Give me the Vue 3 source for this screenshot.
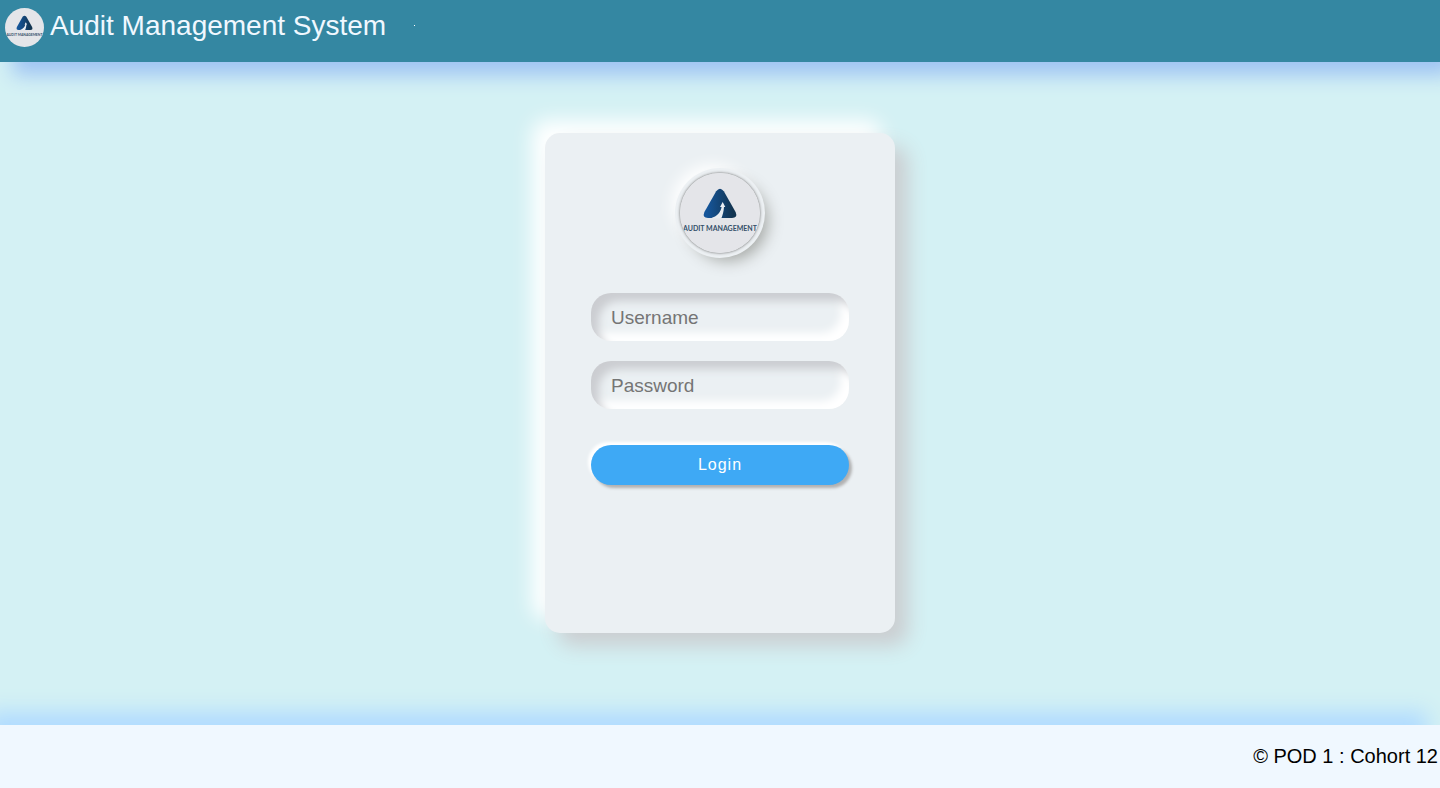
<script setup>
import { ref } from 'vue'

const username = ref('')
const password = ref('')
</script>

<template>
  <div class="page">
    <svg class="defs" width="0" height="0" aria-hidden="true">
      <defs>
        <linearGradient id="peak" x1="0" y1="0" x2="1" y2="0">
          <stop offset="0.1" stop-color="#15559a" />
          <stop offset="0.9" stop-color="#123450" />
        </linearGradient>
        <symbol id="audit-logo" viewBox="0 0 80 80">
          <rect width="80" height="80" fill="#e4e5e9" />
          <path
            d="M36.200 18.200Q40 13.200 43.800 18.200L55.600 39Q58 44.900 52 45H28Q22 44.900 24.400 39Z"
            fill="url(#peak)"
          />
          <path
            d="M31 45.200C37 43.200 40.600 39.500 41.600 34H40L42.700 29L45.300 34H44C43.700 38.500 42.700 42 41.400 45.200Z"
            fill="#e9edf2"
          />
          <text x="40" y="57.500" text-anchor="middle" class="logo-text">AUDIT MANAGEMENT</text>
        </symbol>
      </defs>
    </svg>

    <header class="topbar">
      <svg class="brand-logo" role="img" aria-label="Audit Management"><use href="#audit-logo" /></svg>
      <h1 class="brand">Audit Management System</h1>
      <span class="dot"></span>
    </header>

    <main class="content">
      <form class="card" @submit.prevent>
        <div class="badge">
          <svg class="badge-logo" role="img" aria-label="Audit Management"><use href="#audit-logo" /></svg>
        </div>
        <input v-model="username" class="field" type="text" placeholder="Username" aria-label="Username" />
        <input v-model="password" class="field" type="password" placeholder="Password" aria-label="Password" />
        <button class="login" type="submit">Login</button>
      </form>
    </main>

    <footer class="footer">© POD 1 : Cohort 12</footer>
  </div>
</template>

<style>
body {
  margin: 0;
}
</style>

<style scoped>
.page {
  display: flex;
  flex-direction: column;
  min-height: 100vh;
  overflow: hidden;
  background: #d4f1f4;
  font-family: "Liberation Sans", Arial, sans-serif;
}

.defs {
  position: absolute;
}

.logo-text {
  font-family: Lato, sans-serif;
  font-size: 7px;
  font-weight: 700;
  fill: #34506a;
}

.topbar {
  display: flex;
  align-items: flex-start;
  box-sizing: border-box;
  min-height: 62px;
  padding: 8px 5px;
  background: #3487a2;
  box-shadow: 13px 13px 20px #9ec3f3;
}

.brand-logo {
  width: 39px;
  height: 39px;
  border-radius: 50%;
}

.brand {
  margin: 0 0 0 6px;
  color: aliceblue;
  font-size: 28px;
  font-weight: 400;
  line-height: 35px;
}

.dot {
  width: 1px;
  height: 1px;
  margin: 17px 0 0 28px;
  background: #fff;
}

.content {
  display: flex;
  flex: 1;
  align-items: flex-start;
  justify-content: center;
  padding: 71px 16px 92px;
}

.card {
  display: flex;
  flex-direction: column;
  align-items: stretch;
  box-sizing: border-box;
  width: 350px;
  min-height: 500px;
  padding: 40px 46px;
  border-radius: 15px;
  background: #ebf0f3;
  box-shadow: 13px 13px 20px #cbced1, -13px -13px 20px #fff;
}

.badge {
  align-self: center;
  width: 80px;
  height: 80px;
  margin-bottom: 40px;
  border-radius: 50%;
  box-shadow:
    0 0 3px #5f5f5f,
    0 0 0 5px #ecf0f3,
    8px 8px 15px #a7aaa7,
    -8px -8px 15px #fff;
}

.badge-logo {
  display: block;
  width: 80px;
  height: 80px;
  border-radius: 50%;
}

.field {
  box-sizing: border-box;
  width: 100%;
  height: 48px;
  margin: 0 0 20px;
  padding: 12px 20px 10px;
  border: 0;
  border-radius: 20px;
  outline: none;
  background: none;
  box-shadow: inset 8px 8px 8px #cbcdd1, inset -8px -8px 8px #fff;
  color: #555;
  font-family: inherit;
  font-size: 19px;
}

.field::placeholder {
  color: #757575;
}

.login {
  height: 40px;
  margin: 16px 0 0;
  padding: 0;
  border: 0;
  border-radius: 25px;
  background: #3ea9f5;
  box-shadow: 3px 3px 3px #b1b1b1, -3px -3px 3px #fff;
  color: #fff;
  font-family: inherit;
  font-size: 16px;
  letter-spacing: 1px;
  cursor: pointer;
}

.footer {
  box-sizing: border-box;
  min-height: 63px;
  padding: 20px 2px 20px 16px;
  background: aliceblue;
  box-shadow: -13px -13px 20px #b0dbff;
  color: #000;
  font-size: 20px;
  line-height: 23px;
  text-align: right;
}
</style>
